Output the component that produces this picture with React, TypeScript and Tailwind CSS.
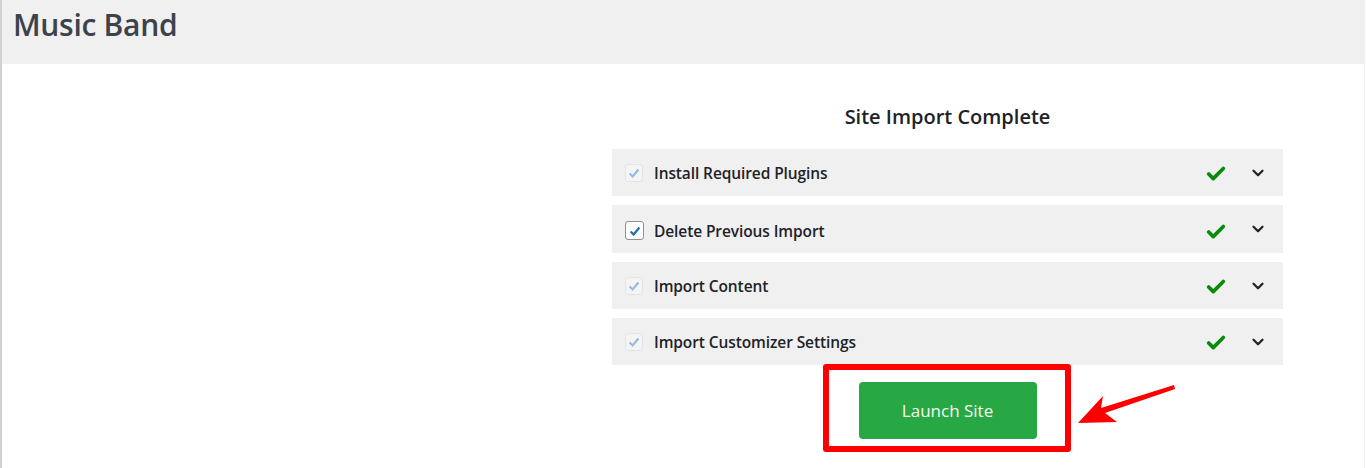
import { Check, ChevronDown } from 'lucide-react'

const steps = [
  { label: 'Install Required Plugins', locked: true },
  { label: 'Delete Previous Import', locked: false },
  { label: 'Import Content', locked: true },
  { label: 'Import Customizer Settings', locked: true },
]

function StepBox({ locked }: { locked: boolean }) {
  if (locked) {
    return (
      <span className="w-[18px] h-[18px] rounded-[3px] border border-[#e4e4e4] bg-[#f4f4f4] flex items-center justify-center">
        <svg viewBox="0 0 16 16" className="w-[14px] h-[14px]">
          <path d="M3 8.5 L6.5 12 L13 4" fill="none" stroke="#94bbe0" strokeWidth="2.4" />
        </svg>
      </span>
    )
  }
  return (
    <span className="w-[19px] h-[19px] mt-[3px] rounded-[3px] border border-[#8c8f94] bg-white flex items-center justify-center">
      <svg viewBox="0 0 16 16" className="w-[14px] h-[14px]">
        <path d="M3 8.5 L6.5 12 L13 4" fill="none" stroke="#2271b1" strokeWidth="2.6" />
      </svg>
    </span>
  )
}

export default function App() {
  return (
    <div className="w-[1366px] h-[468px] bg-white border-l-2 border-[#d0d0d0] overflow-hidden relative" style={{ fontFamily: '"Open Sans", "Noto Sans", sans-serif' }}>
      <header className="h-[64px] bg-[#f0f0f0] flex items-start pt-[4px] pl-[11px] mr-[1px]">
        <h1 className="text-[30px] leading-[42px] font-semibold text-[#3c434a] tracking-[-0.3px]">Music Band</h1>
      </header>

      <div className="border-r border-[#f2f2f2] h-[404px] mr-[1px]">
        <div className="ml-[610px] w-[671px] pt-[39px] flex flex-col">
          <h2 className="text-center text-[20px] font-semibold text-[#1d2327] leading-[28px]">Site Import Complete</h2>
          <div className="mt-[18px] flex flex-col gap-[9px]">
            {steps.map((s, i) => (
              <div key={s.label} className={`bg-[#f0f0f0] flex items-center pl-[13px] pr-[16px] ${i === 1 ? 'h-[48px]' : 'h-[47px]'}`}>
                <StepBox locked={s.locked} />
                <span className={`${s.locked ? 'ml-[11px] pt-[2px]' : 'ml-[10px] pt-[6px]'} text-[15.5px] font-semibold text-[#1d2327] tracking-[-0.1px]`}>{s.label}</span>
                <Check className={`ml-auto w-[22px] h-[22px] text-[#0a8a0a] ${i === 1 ? 'mt-[6px]' : 'mt-[2px]'}`} strokeWidth={4} />
                <ChevronDown className="ml-[22px] w-[18px] h-[18px] text-[#1d2327]" strokeWidth={3} />
              </div>
            ))}
          </div>
          <div className="flex justify-center mt-[17px]">
            <button className="w-[178px] h-[57px] rounded-[4px] bg-[#28a745] text-[#f4fbf0] text-[17px]">Launch Site</button>
          </div>
        </div>
      </div>

      <div className="absolute left-[821px] top-[364px] w-[248px] h-[88px] border-[6px] border-[#ff0000] rounded-[3px] pointer-events-none" />
      <svg className="absolute left-[1073px] top-[382px] pointer-events-none" width="102" height="48" viewBox="0 0 102 48">
        <path d="M3 41 L28 14 L26 26 L99 3 L100 7 L30 31 L42 40 Z" fill="#ff0000" />
      </svg>
    </div>
  )
}
